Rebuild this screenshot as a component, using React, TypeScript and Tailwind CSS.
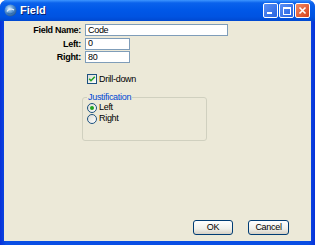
import React from "react";

function TitleIcon() {
  return (
    <svg width="13" height="13" viewBox="0 0 13 13">
      <defs>
        <radialGradient id="g" cx="40%" cy="35%" r="70%">
          <stop offset="0%" stopColor="#d6ecff" />
          <stop offset="45%" stopColor="#5d9ad8" />
          <stop offset="100%" stopColor="#1d4f8f" />
        </radialGradient>
      </defs>
      <circle cx="6.5" cy="6.5" r="6" fill="url(#g)" />
      <path d="M3 7.5c1.5-2.5 4.5-3 7-1.5" stroke="#e8f4ff" strokeWidth="1.2" fill="none" />
      <path d="M3.5 9.5c2 .8 4.5.5 6-1" stroke="#2a6bb0" strokeWidth="1" fill="none" />
    </svg>
  );
}

function Checkbox() {
  return (
    <div className="w-[10px] h-[10px] border border-[#1c5180] bg-[linear-gradient(135deg,#dcdcd5,#ffffff)] flex items-center justify-center">
      <svg width="8" height="8" viewBox="0 0 8 8">
        <path d="M1.2 3.8 3 5.7 6.8 1.8" stroke="#21a121" strokeWidth="1.6" fill="none" />
      </svg>
    </div>
  );
}

function Radio({ checked }: { checked?: boolean }) {
  return (
    <div className="w-[10px] h-[10px] rounded-full border border-[#1c5180] bg-[linear-gradient(135deg,#dcdcd5,#ffffff)] flex items-center justify-center">
      {checked && <div className="w-[4px] h-[4px] rounded-full bg-[#21a121]" />}
    </div>
  );
}

function Button({ label, w }: { label: string; w: string }) {
  return (
    <button
      className={`${w} h-[15px] rounded-[3px] border border-[#003c74] bg-[linear-gradient(to_bottom,#ffffff,#f0f0ea_60%,#d6d0c5)] text-[9px] leading-none text-black flex items-center justify-center`}
    >
      {label}
    </button>
  );
}

export default function App() {
  return (
    <div className="w-[315px] h-[245px] flex flex-col bg-[linear-gradient(to_right,#0831d9,#0a4ee4_2%,#0a4ee4_98%,#0831d9)] rounded-t-[7px] overflow-hidden font-['Liberation_Sans',Arial,sans-serif] tracking-[-0.3px]">
      {/* title bar */}
      <div className="h-[21px] flex items-center pl-[4px] pr-[5px] bg-[linear-gradient(to_bottom,#3d95ff_0%,#0a62ec_14%,#0058e8_45%,#0053e1_80%,#0048d0_100%)]">
        <TitleIcon />
        <span className="ml-[3px] text-white font-bold text-[11px] tracking-normal [text-shadow:1px_1px_0_#0a1e6e]">
          Field
        </span>
        <div className="ml-auto flex gap-[1px]">
          <div className="w-[15px] h-[15px] rounded-[2px] border border-white bg-[linear-gradient(135deg,#5a8ff5,#2663e0)] flex items-end justify-start pl-[3px] pb-[3px]">
            <div className="w-[5px] h-[2px] bg-white" />
          </div>
          <div className="w-[15px] h-[15px] rounded-[2px] border border-white bg-[linear-gradient(135deg,#5a8ff5,#2663e0)] flex items-center justify-center">
            <div className="w-[8px] h-[8px] border border-white border-t-2" />
          </div>
          <div className="w-[15px] h-[15px] rounded-[2px] border border-white bg-[linear-gradient(135deg,#f08a64,#d5401a)] flex items-center justify-center">
            <svg width="9" height="9" viewBox="0 0 9 9">
              <path d="M1.5 1.5l6 6M7.5 1.5l-6 6" stroke="#fff" strokeWidth="1.6" />
            </svg>
          </div>
        </div>
      </div>

      {/* body */}
      <div className="flex-1 mx-[4px] mb-[4px] bg-[#ece9d8] flex flex-col text-[9px] text-black">
        <div className="pt-[3px] grid grid-cols-[77px_auto] gap-x-[4px] gap-y-[1.5px] items-center leading-[12px]">
          <span className="text-right font-bold">Field Name:</span>
          <div className="w-[143px] h-[12px] border border-[#7f9db9] bg-white px-[2px] flex items-center leading-none">Code</div>
          <span className="text-right font-bold">Left:</span>
          <div className="w-[45px] h-[12px] border border-[#7f9db9] bg-white px-[2px] flex items-center leading-none">0</div>
          <span className="text-right font-bold">Right:</span>
          <div className="w-[45px] h-[12px] border border-[#7f9db9] bg-white px-[2px] flex items-center leading-none">80</div>
        </div>

        <div className="mt-[11px] ml-[83px] flex items-center gap-[2px] h-[10px]">
          <Checkbox />
          <span className="leading-none">Drill-down</span>
        </div>

        <fieldset className="mt-[8px] ml-[78px] w-[125px] border border-[#d0d0bf] rounded-[3px] px-[4px]">
          <legend className="px-[1px] text-[#0046d5] leading-[10px]">Justification</legend>
          <div className="h-[38px] flex flex-col">
            <div className="h-[11px] flex items-center gap-[2px]">
              <Radio checked />
              <span className="leading-none">Left</span>
            </div>
            <div className="h-[11px] flex items-center gap-[2px]">
              <Radio />
              <span className="leading-none">Right</span>
            </div>
          </div>
        </fieldset>

        <div className="mt-auto flex justify-end gap-[15px] pr-[22px] pb-[6px]">
          <Button label="OK" w="w-[40px]" />
          <Button label="Cancel" w="w-[41px]" />
        </div>
      </div>
    </div>
  );
}
